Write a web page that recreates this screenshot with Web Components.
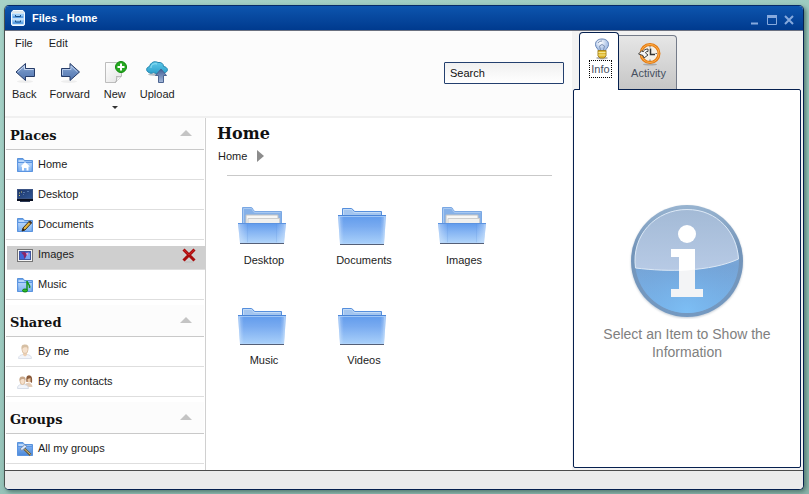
<!DOCTYPE html>
<html lang="en">
<head>
<meta charset="utf-8">
<title>Files - Home</title>
<style>
html, body { margin: 0; height: 100%; }
body {
  box-sizing: border-box; padding: 5px 5px 4px 4px;
  font: 11px/14px "Liberation Sans", Arial, sans-serif; color: #1c1c1c;
  background: linear-gradient(160deg, #a6d2c7 0%, #9ccabf 45%, #8ab3aa 100%);
}
</style>
</head>
<body>
<fm-window heading="Files - Home">
  <fm-toolbar slot="main">
    <fm-tool icon="back">Back</fm-tool>
    <fm-tool icon="forward">Forward</fm-tool>
    <fm-tool icon="new" menu>New</fm-tool>
    <fm-tool icon="upload">Upload</fm-tool>
  </fm-toolbar>
  <fm-sidebar slot="side">
    <fm-section heading="Places">
      <fm-place icon="home">Home</fm-place>
      <fm-place icon="desktop">Desktop</fm-place>
      <fm-place icon="documents">Documents</fm-place>
      <fm-place icon="images" selected>Images</fm-place>
      <fm-place icon="music">Music</fm-place>
    </fm-section>
    <fm-section heading="Shared">
      <fm-place icon="user">By me</fm-place>
      <fm-place icon="users">By my contacts</fm-place>
    </fm-section>
    <fm-section heading="Groups">
      <fm-place icon="groups">All my groups</fm-place>
    </fm-section>
  </fm-sidebar>
  <fm-folder slot="content" heading="Home">
    <fm-item icon="folder-open">Desktop</fm-item>
    <fm-item icon="folder">Documents</fm-item>
    <fm-item icon="folder-open">Images</fm-item>
    <fm-item icon="folder">Music</fm-item>
    <fm-item icon="folder">Videos</fm-item>
  </fm-folder>
  <fm-inspector slot="inspector">Select an Item to Show the Information</fm-inspector>
</fm-window>

<script>
const smallFolder = `
  <defs>
    <linearGradient id="sf" x2="0" y2="1"><stop stop-color="#b4d4fa"/><stop offset="1" stop-color="#7fb2f2"/></linearGradient>
  </defs>
  <path d="M.5 14.500V1.500H6L7.500 3.500H15.500V14.500Z" fill="#6ea5ea" stroke="#5a93db"/>
  <path d="M1.500 5.500V3H6.500L7.500 4.500H14.500V5.500Z" fill="#b9d7fb"/>
  <path d="M.5 5.500H15.500L15 14.500H1Z" fill="url(#sf)" stroke="#5b95e2"/>`;

const icons = {
  app: [14, 16, `<path d="M2 .5H12L13.500 2.500V14Q13.500 15.500 12 15.500H2Q.5 15.500.5 14V2.500Z" fill="#cfe6f8" stroke="#f4faff"/>
    <path d="M2.500 1.500H11.500L12.500 3H1.500Z" fill="#e4e6e2"/>
    <path d="M1.500 4H12.500V8.500H1.500ZM1.500 9.500H12.500V14H1.500Z" fill="#5fa3e6"/><path d="M1.500 4H12.500V6H1.500ZM1.500 9.500H12.500V11.500H1.500Z" fill="#9ccdf7"/>
    <path d="M1.500 9H12.500" stroke="#eef7ff"/><path d="M4.500 5V6.500H9.500V5M4.500 10.500V12H9.500V10.500" fill="none" stroke="#174c86"/>`],
  min: [10, 10, `<path d="M1 8.500H8" stroke="#86a9dd" stroke-width="2"/>`],
  max: [10, 10, `<path d="M.5 9.500V.5H9.500V9.500Z" fill="none" stroke="#86a9dd"/><path d="M0 1.500H10" stroke="#86a9dd" stroke-width="3"/>`],
  close: [10, 10, `<path d="M1 1L9 9M9 1L1 9" stroke="#86a9dd" stroke-width="2"/>`],
  back: [24, 24, `<defs><linearGradient id="a" x2="0" y2="1"><stop stop-color="#9bb6dd"/><stop offset=".5" stop-color="#6a8cc0"/><stop offset="1" stop-color="#5577b0"/></linearGradient></defs>
    <ellipse cx="13" cy="21.500" rx="8" ry="1.500" fill="#eee"/>
    <path d="M4 12L13.500 3.500V8.500H22.500V16.500H13.500V20.500Z" fill="url(#a)" stroke="#263c68" stroke-linejoin="round"/>
    <path d="M5.500 12L12.500 6V9.500H21.500" fill="none" stroke="#c7d7f0"/>`],
  forward: [24, 24, `<defs><linearGradient id="a" x2="0" y2="1"><stop stop-color="#9bb6dd"/><stop offset=".5" stop-color="#6a8cc0"/><stop offset="1" stop-color="#5577b0"/></linearGradient></defs>
    <ellipse cx="11" cy="21.500" rx="8" ry="1.500" fill="#eee"/>
    <path d="M21.500 12L12 3.500V8.500H3.500V16.500H12V20.500Z" fill="url(#a)" stroke="#263c68" stroke-linejoin="round"/>
    <path d="M4.500 15V9.500H13V6L19.500 12" fill="none" stroke="#b4c9e9"/>`],
  new: [24, 24, `<defs><linearGradient id="p" x2="1" y2="1"><stop stop-color="#fff"/><stop offset="1" stop-color="#e2e2e2"/></linearGradient></defs>
    <path d="M2.500 2.500H18.500V16L12.500 22.500H2.500Z" fill="url(#p)" stroke="#bdbdbd"/>
    <path d="M12.500 22.500C14 20 14 18 13.500 16.500C15.500 17 17 17 18.500 16" fill="#fff" stroke="#a6a6a6"/>
    <circle cx="18" cy="7" r="5.500" fill="#27a821" stroke="#0f8a0d"/><path d="M18 3.500V10.500M14.500 7H21.500" stroke="#fff" stroke-width="2"/>`],
  upload: [24, 24, `<defs><linearGradient id="c" x2="0" y2="1"><stop stop-color="#5ec9ea"/><stop offset="1" stop-color="#2c9fcb"/></linearGradient><linearGradient id="u" x2="0" y2="1"><stop stop-color="#3f5e96"/><stop offset="1" stop-color="#a5b9d9"/></linearGradient></defs>
    <ellipse cx="12" cy="14.500" rx="9" ry="1.500" fill="#b7bec3"/>
    <path d="M4 12.500C1 11.500.5 7.500 4.500 6.500C5.500 2.500 9.500.5 13 2.500C16 2 18.500 3.500 18.500 6.500C23 7 23.500 11 20.500 12.500C19 14 16 13 15 13C12 14.500 10 13 8.500 12.500C7 13.500 5 13.500 4 12.500Z" fill="url(#c)" stroke="#2586ae"/>
    <path d="M6 8C5.500 5 9 3 12 4" stroke="#95e1f5" fill="none"/>
    <path d="M16 9L21.500 15.500H18.500V22.500H13.500V15.500H10.500Z" fill="url(#u)" stroke="#4c6491"/>`],
  home: [16, 16, smallFolder + `<path d="M8 5L3.500 9.500H5V13.500H7V11H9.500V13.500H11.500V9.500H13Z" fill="#fff"/>`],
  documents: [16, 16, smallFolder + `<path d="M5 14L6 11L12.500 4L14.500 6L8 13Z" fill="#e3b23c" stroke="#3f3420"/><path d="M5 14L6 11L8 13Z" fill="#222"/><path d="M11.500 5L13.500 7L15 5.500L13 3.500Z" fill="#47372d"/>`],
  music: [16, 16, smallFolder + `<path d="M10 13V4C10 6.500 13.500 7 12.500 11" fill="none" stroke="#16921a" stroke-width="1.500"/><ellipse cx="8" cy="13.500" rx="2.500" ry="1.500" fill="#2bbd25" stroke="#0d7d10"/>`],
  groups: [16, 16, smallFolder.replaceAll('#7fb2f2', '#4b87d8').replaceAll('#b4d4fa', '#7aaef0') + `<path d="M7 7.500L13.500 14" stroke="#6a5a3a" stroke-width="2.500"/><path d="M7 7.500L13.500 13.500" stroke="#d9c27c"/><path d="M3 8L5 9.500L8.500 6.500L10 5L7.500 4Z" fill="#e6eefa" stroke="#7790b5"/>`],
  desktop: [16, 16, `<defs><linearGradient id="d" x2="1" y2="1"><stop stop-color="#1d3566"/><stop offset="1" stop-color="#2f5697"/></linearGradient></defs>
    <rect x=".5" y="2.500" width="15" height="9" fill="url(#d)" stroke="#3b5484"/><path d="M2 6H3M4 5H5M2 8.500H3" stroke="#d3ca73"/><path d="M6 5.500H8M6 7.500H7M10 4.500H12" stroke="#5577ad"/>
    <path d="M0 12H16V14H0Z" fill="#090f20"/><path d="M3 14.500H13" stroke="#2c3a56"/>`],
  images: [16, 16, `<rect x=".5" y="2.500" width="15" height="12" fill="#f5f5f5" stroke="#757575"/><rect x="2.500" y="4.500" width="11" height="8" fill="#3f66d8" stroke="#40569f"/>
    <path d="M8 12L10 7L13 6V12Z" fill="#7ba6f0"/><path d="M4 5.500L8 5L10 7.500L7.500 12L6.500 8Z" fill="#8d2567"/><path d="M9 6L12 5.500L10 9Z" fill="#e6a5d0"/>`],
  user: [16, 16, `<path d="M1.500 14.500C1.500 11.500 4 11 6 10.500H10C13 11 14.500 12 14.500 14.500Z" fill="#f3f5fa" stroke="#dde2ec"/>
    <path d="M6 8V11L8 12.500L10 11V8Z" fill="#ecd0b5"/><ellipse cx="8" cy="5.500" rx="3" ry="4" fill="#f5e1cd" stroke="#dec5ab"/><path d="M4.500 5C4 1 6 .5 8 .5C11 .5 12 2 11.500 5C10.500 2.500 7 2.500 4.500 5Z" fill="#d6bfa3"/>`],
  users: [16, 16, `<path d="M6.500 13C8 9.500 9 9 11.500 9C14 9 15.500 11 15.500 13Z" fill="#e3cdb9"/><ellipse cx="12" cy="5" rx="2.500" ry="3.500" fill="#eac6a2"/><path d="M9.500 8C9 2 10 1.500 12 1.500C15 1.500 15.500 4 15 9L13.500 8V4L10.500 5V8Z" fill="#895a3b"/>
    <path d="M.5 14.500C.5 11.500 2 11 4 10.500H7C9.500 11 11.500 12 11.500 14.500Z" fill="#f2f5fa" stroke="#d7dde8"/><ellipse cx="5.500" cy="7" rx="2.500" ry="3.500" fill="#f5dfca" stroke="#dabd9f"/><path d="M2.500 7C2 3 4 2.500 5.500 2.500C8 2.500 9 4 8.500 6.500C7 4.500 4.500 4.500 2.500 7Z" fill="#c7a78a"/>`],
  remove: [16, 16, `<path d="M4 15H12" stroke="#bbb"/><path d="M2.500 2.500L13.500 13.500M13.500 2.500L2.500 13.500" stroke="#a80c0c" stroke-width="3"/><path d="M3 3L8 8L13 3" fill="none" stroke="#cf2121"/>`],
  folder: [48, 48, `<defs><linearGradient id="f" x2="0" y2="1"><stop stop-color="#5f9aec"/><stop offset=".4" stop-color="#79abf0"/><stop offset="1" stop-color="#a9d0fa"/></linearGradient>
    <linearGradient id="e"><stop stop-color="#fff" stop-opacity=".4"/><stop offset=".12" stop-color="#fff" stop-opacity="0"/><stop offset=".88" stop-color="#fff" stop-opacity="0"/><stop offset="1" stop-color="#fff" stop-opacity=".4"/></linearGradient></defs>
    <path d="M4.500 15V5.500H13.500C15 5.500 15 8.500 17 8.500H43.500V15Z" fill="#a3c5ef" stroke="#558edc"/>
    <path d="M5.500 12V6.500H13.500C15 8 15 9.500 17 9.500H42.500" fill="none" stroke="#c3dbf7"/>
    <path d="M2 41.500H46" stroke="#545f77"/>
    <path d="M0 12H48L46 41H2Z" fill="url(#f)"/><path d="M0 12H48L46 41H2Z" fill="url(#e)"/>
    <path d="M0 12.500H48" stroke="#4c86d8"/><path d="M1.500 13.500L2.500 40.500H45.500L46.500 13.500Z" fill="none" stroke="#b5d6fb" stroke-opacity=".7"/>`],
  'folder-open': [48, 48, `<defs><linearGradient id="f" x2="0" y2="1"><stop stop-color="#5f9aec"/><stop offset=".45" stop-color="#86b5f3"/><stop offset="1" stop-color="#b0d4fa"/></linearGradient>
    <linearGradient id="e"><stop stop-color="#fff" stop-opacity=".4"/><stop offset=".2" stop-color="#fff" stop-opacity="0"/><stop offset=".8" stop-color="#fff" stop-opacity="0"/><stop offset="1" stop-color="#fff" stop-opacity=".4"/></linearGradient></defs>
    <path d="M4.500 38V4.500H13.500C15 4.500 15 8.500 17 8.500H43.500V38Z" fill="#86b1e8" stroke="#7aa8e4"/>
    <path d="M5.500 20V5.500H13.500C15 7 15 9.500 17 9.500H42.500" fill="none" stroke="#a9c9f1"/>
    <path d="M8 22V12H40V22Z" fill="#f7f7f6" stroke="#c2c2c2"/><path d="M10 22V15.500H41.500V22Z" fill="#f1f1ef" stroke="#cdcdcd"/>
    <path d="M2 40.500H46" stroke="#545f77"/>
    <path d="M0 20H48L46 40H2Z" fill="url(#f)"/><path d="M0 20H48L46 40H2Z" fill="url(#e)"/>
    <path d="M0 20.500H48" stroke="#5c93e0"/><path d="M9.500 21V39.500M38.500 21V39.500" stroke="#5d93dc" stroke-opacity=".2"/><path d="M1.500 21.500L2.500 39.500H45.500L46.500 21.500" fill="none" stroke="#b5d6fb" stroke-opacity=".5"/>`],
  bulb: [22, 22, `<defs><radialGradient id="b" cx=".4" cy=".3"><stop stop-color="#fff"/><stop offset="1" stop-color="#b0c6e8"/></radialGradient></defs>
    <ellipse cx="11" cy="20" rx="6" ry="1.500" fill="#b5b5b5"/>
    <path d="M7.500 13C7.500 11 4.500 9.500 4.500 6.500C4.500 3 7 1 11 1C15 1 17.500 3 17.500 6.500C17.500 9.500 14.500 11 14.500 13Z" fill="url(#b)" stroke="#6382b5"/>
    <path d="M9.500 12L8.500 8L11 6.500L13.500 8L12.500 12M7 5C8 3.500 9.500 3 11 3" fill="none" stroke="#7f93b5"/>
    <path d="M7 12.500H15V18L13 20H9L7 18Z" fill="#dfb82e" stroke="#a58425"/><path d="M7.500 14.500H14.500M7.500 17H14.500" stroke="#f6e68e"/>`],
  activity: [24, 24, `<ellipse cx="13" cy="22.500" rx="7" ry="1" fill="#aaa"/><circle cx="13" cy="11.500" r="9" fill="#f4f0e7" stroke="#e47a11" stroke-width="3"/><circle cx="13" cy="11.500" r="9" fill="none" stroke="#fdb14d"/>
    <path d="M13 4V5.500M20 11.500H18.500M13 19V17.500" stroke="#666"/><path d="M13.500 6.500V12.500H18" fill="none" stroke="#333" stroke-width="1.500"/>
    <path d="M1.500 12L5 8.500L6 10C7 8 8 7 11 7V9.500C9 9.500 8.500 10 8.500 11L11 13L7 16L6 13.500Z" fill="#f5f5f5" stroke="#444"/>`],
  info: [116, 116, `<defs><linearGradient id="g" x2="0" y2="1"><stop stop-color="#a3bddb"/><stop offset=".55" stop-color="#76a4d6"/><stop offset="1" stop-color="#7cbaf0"/></linearGradient>
    <radialGradient id="r" cx=".5" cy="1" r=".65"><stop stop-color="#7dbff5"/><stop offset="1" stop-color="#6c9fd8" stop-opacity="0"/></radialGradient>
    <linearGradient id="h" x2="0" y2="1"><stop stop-color="#a3bad6"/><stop offset="1" stop-color="#b7cae5"/></linearGradient>
    <linearGradient id="rim" x2="0" y2="1"><stop stop-color="#98b4d0"/><stop offset=".4" stop-color="#7394b9"/><stop offset="1" stop-color="#7499c1"/></linearGradient>
    <filter id="s" x="-10%" y="-10%" width="120%" height="120%"><feGaussianBlur stdDeviation="1"/></filter></defs>
    <circle cx="58" cy="59" r="56" fill="#8798ab" opacity=".5" filter="url(#s)"/>
    <circle cx="58" cy="58" r="56" fill="url(#rim)"/><circle cx="58" cy="58" r="52" fill="url(#g)"/><circle cx="58" cy="58" r="52" fill="url(#r)"/>
    <path d="M6.500 65C2 32 27 6.500 58 6.500C89 6.500 108 30 109.500 56C81 69 39 69 6.500 65Z" fill="url(#h)"/>
    <path d="M6.500 65C2 32 27 6.500 58 6.500C89 6.500 108 30 109.500 56C81 69 39 69 6.500 65" fill="none" stroke="#dce8f5"/>
    <circle cx="58" cy="31" r="9" fill="#fff"/><path d="M42 46H66V86H74V94H42V86H50V54H42Z" fill="#fff"/><path d="M50 68C56 68 61 67 66 66.500V86H74V94H42V86H50Z" fill="#f3f4f6"/>`]
};

const define = (name, render, setup) => customElements.define(name, class extends HTMLElement {
  constructor() { super(); this.attachShadow({ mode: 'open' }); }
  connectedCallback() {
    const t = document.createElement('template');
    t.innerHTML = '<style>*{box-sizing:border-box}button{font:inherit;color:inherit;border:0;padding:0;background:none}[hidden]{display:none}</style>' + render(this);
    this.shadowRoot.replaceChildren(t.content.cloneNode(true));
    if (setup) setup(this, this.shadowRoot);
  }
});

define('fm-icon', el => {
  const [w, h, art] = icons[el.getAttribute('name')];
  return `<style>:host{display:block;flex:none}svg{display:block}</style>
    <svg width="${w}" height="${h}" viewBox="0 0 ${w} ${h}" aria-hidden="true">${art}</svg>`;
});

define('fm-window', el => `<style>
  :host{display:flex;flex-direction:column;height:100%;box-sizing:border-box;border:1px solid #06204f;border-top-color:#062a68;
    border-left-color:#4a5350;border-radius:5px;overflow:hidden;background:#fff;box-shadow:2px 2px 4px #52786f}
  header{display:flex;align-items:center;gap:7px;height:25px;padding:0 9px 0 6px;background:linear-gradient(#0d55ae,#003a8e);border-bottom:1px solid #6b7180;color:#fff}
  h1{font:bold 11px/14px "Liberation Sans",Arial,sans-serif;margin:0;flex:1}
  nav{display:flex;gap:7px;padding-top:4px}
  nav button{display:block}
  .body{flex:1;min-height:0;display:grid;grid-template-columns:minmax(0,1fr) 231px}
  .left{display:grid;grid-template-columns:201px minmax(0,1fr);grid-template-rows:auto minmax(0,1fr);min-height:0}
  ::slotted([slot=main]){grid-column:1/3}
  footer{height:19px;background:#ebebeb;border-top:1px solid #4b4b4b}
  </style>
  <header><fm-icon name="app"></fm-icon><h1>${el.getAttribute('heading')}</h1>
    <nav><button aria-label="Minimize"><fm-icon name="min"></fm-icon></button><button aria-label="Maximize"><fm-icon name="max"></fm-icon></button><button aria-label="Close"><fm-icon name="close"></fm-icon></button></nav></header>
  <div class="body"><div class="left"><slot name="main"></slot><slot name="side"></slot><slot name="content"></slot></div><slot name="inspector"></slot></div>
  <footer></footer>`);

define('fm-toolbar', () => `<style>
  :host{display:block;background:#fcfcfc;border-bottom:2px solid #f0f0f0}
  .menu{display:flex;gap:16px;padding:5px 10px 4px}
  .bar{display:flex;justify-content:space-between;align-items:flex-start;padding:6px 8px 0 7px;height:62px}
  .tools{display:flex;gap:13px}
  input{width:120px;height:22px;margin-top:2px;border:1px solid #24406f;border-radius:1px;padding:0 5px;font:inherit;color:#111;background:linear-gradient(#f0f0f0,#fff)}
  </style>
  <div class="menu"><button>File</button><button>Edit</button></div>
  <div class="bar"><div class="tools"><slot></slot></div><input type="text" value="Search" aria-label="Search"></div>`);

define('fm-tool', el => `<style>
  :host{display:block}
  button{display:flex;flex-direction:column;align-items:center;gap:3px}
  .caret{border:3px solid transparent;border-top-color:#333;border-bottom:0;margin-top:2px}
  </style><button><fm-icon name="${el.getAttribute('icon')}"></fm-icon><span><slot></slot></span>${el.hasAttribute('menu') ? '<i class="caret"></i>' : ''}</button>`);

define('fm-sidebar', () => `<style>:host{display:block;border-right:1px solid #d0d0d0;overflow:hidden}</style><slot></slot>`);

define('fm-section', el => `<style>
  :host{display:block}
  header{display:flex;align-items:center;justify-content:space-between;height:32px;margin:0 1px;padding:4px 12px 0 4px;background:#fcfcfc;border-bottom:1px solid #c9c9c9}
  :host(:not(:first-child)) header{margin-top:5px}
  h2{margin:0;font:bold 13px/18px "DejaVu Serif",serif;color:#111}
  i{display:block;border:6px solid transparent;border-bottom-color:#c4c4c4;border-top:0;margin-bottom:5px}
  </style><header><h2>${el.getAttribute('heading')}</h2><button aria-label="Collapse ${el.getAttribute('heading')}" aria-expanded="true"><i></i></button></header>
  <div><slot></slot></div>`, (el, root) => {
    const b = root.querySelector('button');
    b.onclick = () => { const d = root.querySelector('div'); d.hidden = !d.hidden; b.setAttribute('aria-expanded', !d.hidden); };
  });

define('fm-place', el => `<style>
  :host{display:flex;align-items:center;height:30px;margin:0 1px;padding:0 8px 2px 11px;box-sizing:border-box;border-bottom:1px solid #dedede}
  :host([selected]){margin:0 0 0 2px;padding-left:10px;background:linear-gradient(#fff 6px,#cfcfcf 6px)}
  a{flex:1;display:flex;align-items:center;gap:5px;color:inherit;text-decoration:none}
  fm-icon{padding-top:2px}
  </style><a href="#"><fm-icon name="${el.getAttribute('icon')}"></fm-icon><span><slot></slot></span></a>${el.hasAttribute('selected') ? '<button aria-label="Remove"><fm-icon name="remove"></fm-icon></button>' : ''}`);

define('fm-folder', el => `<style>
  :host{display:block;padding:6px 20px 0 8px}
  h1{margin:0 3px;font:bold 16px/20px "DejaVu Serif",serif;color:#111}
  nav{display:flex;align-items:center;gap:10px;height:14px;margin:5px 4px 0}
  nav a{color:inherit;text-decoration:none}
  nav i{border:6px solid transparent;border-left:7px solid #8c8c8c;border-right:0}
  hr{border:0;border-top:1px solid #c9c9c9;margin:12px 0 0 13px}
  .grid{display:grid;grid-template-columns:repeat(auto-fill,100px);padding:24px 0 0}
  </style><h1>${el.getAttribute('heading')}</h1><nav aria-label="Path"><a href="#">${el.getAttribute('heading')}</a><i></i></nav><hr><div class="grid"><slot></slot></div>`);

define('fm-item', el => `<style>
  :host{display:block;height:100px}
  a{display:flex;flex-direction:column;align-items:center;gap:2px;color:inherit;text-decoration:none}
  fm-icon{padding:3px 4px 0 0}
  </style><a href="#"><fm-icon name="${el.getAttribute('icon')}"></fm-icon><span><slot></slot></span></a>`);

define('fm-inspector', () => `<style>
  :host{display:flex;flex-direction:column;min-height:0;padding:0 2px 2px 1px;background:#f2f2f2}
  .tabs{display:flex;align-items:flex-end;padding-left:6px;height:58px;flex:none}
  .tabs button{display:flex;flex-direction:column;align-items:center;color:#47505f}
  .tabs button[aria-selected=true]{width:40px;height:58px;margin-bottom:-1px;border:1px solid #06204f;border-bottom:0;border-radius:4px 4px 0 0;background:#fff;padding:5px 0 0 5px;z-index:1}
  .tabs button[aria-selected=false]{width:58px;height:54px;border:1px solid #747b89;border-left:0;border-bottom:0;border-radius:0 4px 0 0;background:linear-gradient(#e6e6e6,#c6c6c6);padding:6px 0 0 2px}
  .tabs span{padding:1px;border:1px solid transparent}
  [aria-selected=false] span{margin-top:-2px}
  [aria-selected=true] span{border:1px dotted #000;margin-right:2px}
  .panel{flex:1;min-height:0;display:flex;flex-direction:column;align-items:center;justify-content:center;gap:6px;border:1px solid #06204f;border-radius:2px;background:#fff;padding-top:7px}
  p{margin:0;padding:0 24px;text-align:center;font-size:14px;line-height:18px;color:#808080}
  </style><div class="tabs" role="tablist"><button role="tab" aria-selected="true"><fm-icon name="bulb"></fm-icon><span>Info</span></button><button role="tab" aria-selected="false"><fm-icon name="activity"></fm-icon><span>Activity</span></button></div>
  <div class="panel" role="tabpanel"><fm-icon name="info"></fm-icon><p><slot></slot></p></div>`);
</script>
</body>
</html>
